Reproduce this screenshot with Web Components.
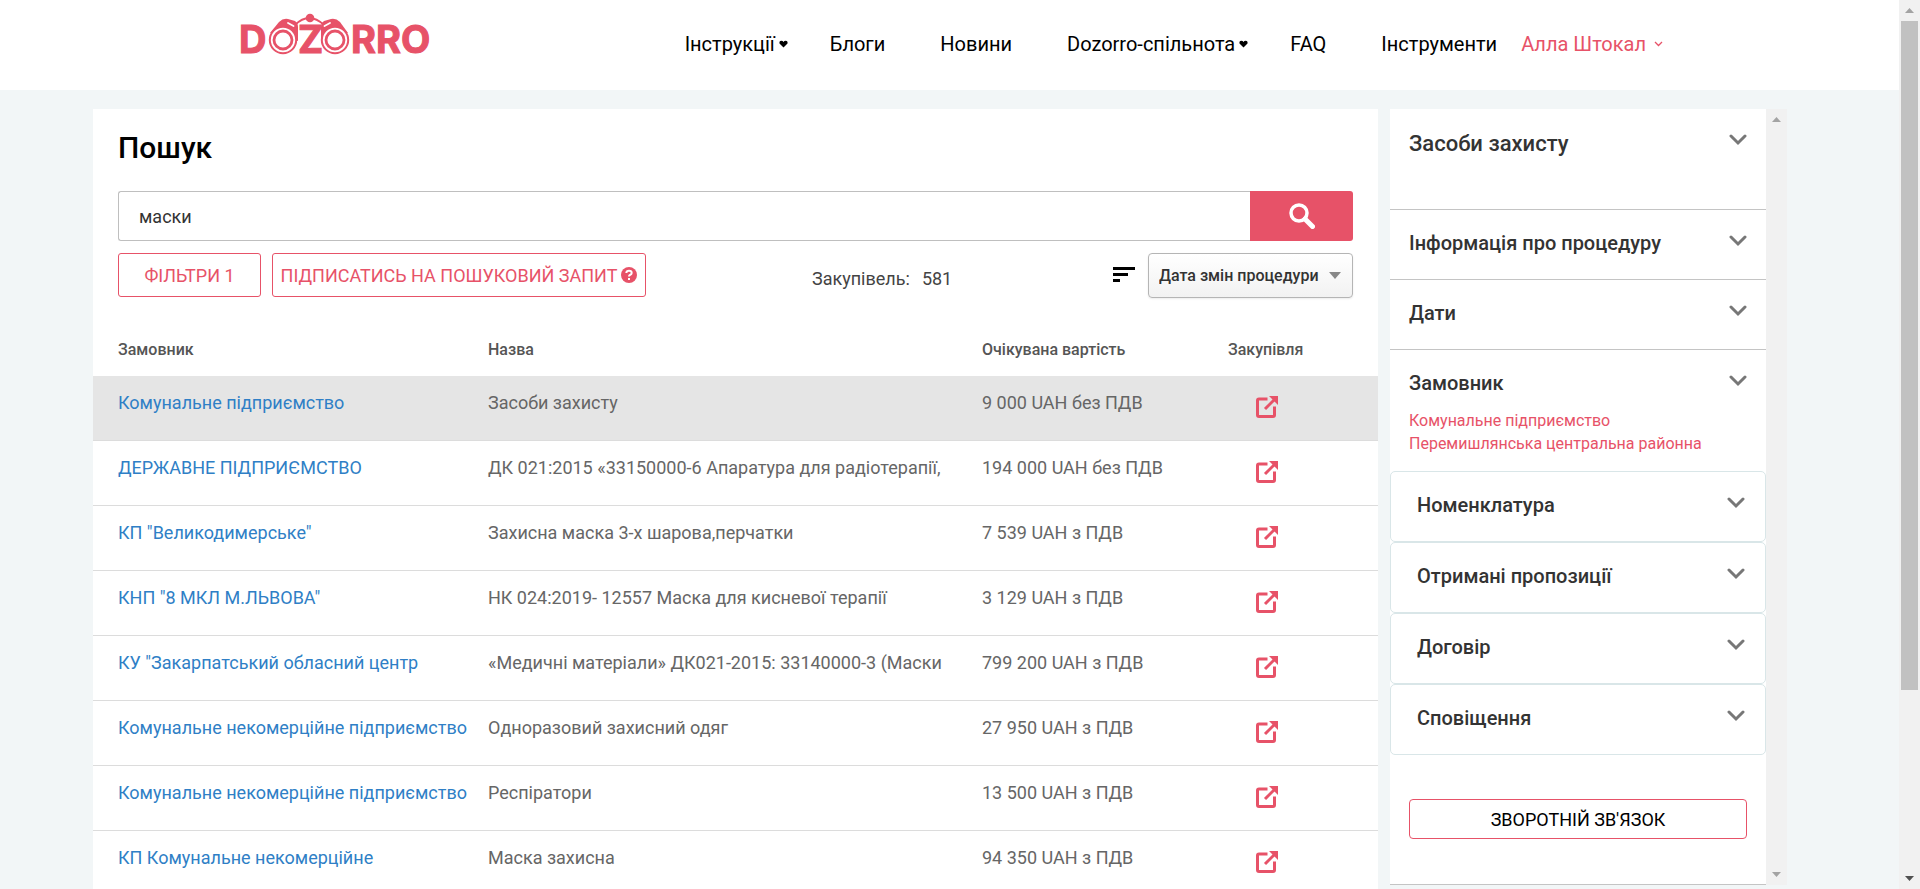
<!DOCTYPE html>
<html lang="uk">
<head>
<meta charset="utf-8">
<title>Dozorro — Пошук</title>
<style>
  html, body { margin: 0; height: 100%; }
  body {
    --accent: #e75268;
    --page: #f2f6f7;
    --ink: #333333;
    font-family: Roboto, "Liberation Sans", sans-serif;
    background: var(--page);
    color: var(--ink);
    overflow: hidden;
  }
</style>
</head>
<body>
<dz-app></dz-app>

<script>
const define = (name, html, setup) => {
  const template = document.createElement('template');
  template.innerHTML = html;
  customElements.define(name, class extends HTMLElement {
    constructor() {
      super();
      this.attachShadow({ mode: 'open' }).append(template.content.cloneNode(true));
    }
    connectedCallback() {
      if (setup && !this.ready) { this.ready = true; setup(this, this.shadowRoot); }
    }
  });
};

define('dz-logo', `
<style>
  :host { display: block; }
  a { display: block; }
  svg { display: block; }
  text { font: 700 38px Inter, Roboto, sans-serif; fill: var(--accent); stroke: var(--accent); stroke-width: 1; }
</style>
<a href="#" aria-label="Dozorro">
<svg width="204" height="64" viewBox="-4 0 204 64">
  <text x="-2" y="43">D</text>
  <text x="57" y="43">Z</text>
  <text x="110" y="43">RRO</text>
  <path d="M54 15 Q68 1 83 15" fill="none" stroke="var(--accent)" stroke-width="2"/>
  <circle cx="69" cy="8" r="4.300" fill="var(--accent)"/>
  <path d="M29 23 L38 12 Q42 8 47 9 L54 11 Q57 13 57 17 L57 31 Z" fill="var(--accent)"/>
  <path d="M107 23 L99 12 Q95 8 90 9 L83 11 Q80 13 80 17 L80 31 Z" fill="var(--accent)"/>
  <path d="M47 13 l5.500 3 M89 13 l-5.500 3" stroke="#fff" stroke-width="1.800" stroke-linecap="round"/>
  <g stroke="var(--accent)" fill="#fff">
    <circle cx="42" cy="30" r="13.200" stroke-width="2"/>
    <circle cx="94" cy="30" r="13.200" stroke-width="2"/>
    <circle cx="42" cy="30" r="9" stroke-width="2.800"/>
    <circle cx="94" cy="30" r="9" stroke-width="2.800"/>
  </g>
</svg>
</a>`);

define('dz-nav-link', `
<style>
  :host { display: block; position: relative; }
  a { color: #000; text-decoration: none; font-size: 20px; line-height: 24px; white-space: nowrap; }
  svg { display: none; position: absolute; right: -13px; top: 8px; }
  :host([menu]) svg { display: block; }
</style>
<a href="#"><slot></slot></a>
<svg width="9" height="8" viewBox="0 0 9 8"><path d="M4.500 7.500 L.5 3.500 Q0 1 2.300.7 Q3.800.7 4.500 2 Q5.200.7 6.700.7 Q9 1 8.500 3.500Z" fill="#000"/></svg>`);

define('dz-header', `
<style>
  :host { display: flex; justify-content: space-between; align-items: flex-start; box-sizing: border-box; height: 90px;
    padding: 10px 236px 0 237px; background: #fff; }
  nav { display: flex; gap: 55px; padding-top: 22px; align-items: center; }
  .user { display: flex; align-items: center; gap: 8px; margin-left: -31px; color: var(--accent);
    font-size: 20px; line-height: 24px; text-decoration: none; white-space: nowrap; }
</style>
<dz-logo></dz-logo>
<nav aria-label="Головне меню">
  <dz-nav-link menu>Інструкції</dz-nav-link>
  <dz-nav-link>Блоги</dz-nav-link>
  <dz-nav-link>Новини</dz-nav-link>
  <dz-nav-link menu>Dozorro-спільнота</dz-nav-link>
  <dz-nav-link>FAQ</dz-nav-link>
  <dz-nav-link>Інструменти</dz-nav-link>
  <a class="user" href="#">Алла Штокал
    <svg width="9" height="6" viewBox="0 0 9 6"><path d="M1 1l3.500 3.500L8 1" fill="none" stroke="currentColor" stroke-width="1.300"/></svg></a>
</nav>`);

define('dz-search', `
<style>
  :host { display: block; }
  form { display: flex; height: 50px; }
  input { flex: 1; min-width: 0; box-sizing: border-box; border: 1px solid #bfbfbf; border-right: 0; border-radius: 3px 0 0 3px;
    padding: 0 20px; font: 18px Roboto, sans-serif; color: var(--ink); background: #fff; outline: 0; }
  button { width: 103px; border: 0; border-radius: 0 3px 3px 0; background: var(--accent); display: grid; place-items: center; padding: 0; }
</style>
<form role="search">
  <input type="text" value="маски" aria-label="Пошуковий запит">
  <button type="button" aria-label="Шукати">
    <svg width="26" height="26" viewBox="0 0 26 26" fill="none" stroke="#fff"><circle cx="10" cy="10" r="8" stroke-width="3.500"/><path d="M16 16l7.500 7.500" stroke-width="5" stroke-linecap="round"/></svg>
  </button>
</form>`);

define('dz-toolbar', `
<style>
  :host { display: flex; align-items: flex-start; gap: 11px; }
  button { box-sizing: border-box; height: 44px; border: 1px solid var(--accent); border-radius: 3px; background: #fff; color: var(--accent);
    font: 18px Roboto, sans-serif; padding: 0; display: flex; align-items: center; justify-content: center; gap: 4px; white-space: nowrap; }
  .filters { width: 143px; }
  .subscribe { width: 374px; }
  .count { display: flex; gap: 12px; margin-left: 155px; font-size: 18px; line-height: 24px; padding-top: 14px; color: #444; }
  .sort { margin-left: auto; display: flex; gap: 13px; }
  .sort > svg { margin-top: 14px; }
  .box { display: grid; }
  .box > * { grid-area: 1 / 1; }
  .box svg { justify-self: end; align-self: center; margin-right: 12px; pointer-events: none; }
  select { appearance: none; box-sizing: border-box; width: 205px; height: 45px; border: 1px solid #b5b5b5; border-radius: 4px;
    background: linear-gradient(#fff, #f2f2f2); box-shadow: 0 1px 2px #00000014; padding: 0 10px; font: 500 16px Roboto, sans-serif; color: var(--ink); }
</style>
<button class="filters" type="button">ФІЛЬТРИ 1</button>
<button class="subscribe" type="button">ПІДПИСАТИСЬ НА ПОШУКОВИЙ ЗАПИТ
  <svg width="16" height="16" viewBox="0 0 16 16"><circle cx="8" cy="8" r="8" fill="currentColor"/><path d="M5.300 6 Q5.500 3.800 8 3.800 Q10.700 3.800 10.700 6 Q10.700 7.300 8.900 8 Q8 8.400 8 9.500" fill="none" stroke="#fff" stroke-width="2"/><rect x="7" y="11" width="2" height="2" fill="#fff"/></svg>
</button>
<div class="count"><span>Закупівель:</span><span>581</span></div>
<div class="sort">
  <svg width="22" height="15" viewBox="0 0 22 15"><path d="M0 0h22v3H0zM0 6h15v3H0zM0 12h7v3H0z" fill="#000"/></svg>
  <div class="box">
    <select aria-label="Сортування"><option>Дата змін процедури</option></select>
    <svg width="12" height="7" viewBox="0 0 12 7"><path d="M0 0h12L6 7z" fill="#888"/></svg>
  </div>
</div>`);

define('dz-open-icon', `
<style>:host { display: block; } svg { display: block; }</style>
<svg width="24" height="24" viewBox="0 0 24 24" fill="none" stroke="var(--accent)" stroke-width="3">
  <path d="M12.500 4H4Q2.500 4 2.500 5.500V20Q2.500 21.500 4 21.500H18Q19.500 21.500 19.500 20V11.500" />
  <path d="M10 14L20 4"/><path d="M14 1h9v9z" fill="var(--accent)" stroke="none"/>
</svg>`);

const tenders = [
  ['Комунальне підприємство', 'Засоби захисту', '9 000 UAH без ПДВ'],
  ['ДЕРЖАВНЕ ПІДПРИЄМСТВО', 'ДК 021:2015 «33150000-6 Апаратура для радіотерапії,', '194 000 UAH без ПДВ'],
  ['КП "Великодимерське"', 'Захисна маска 3-х шарова,перчатки', '7 539 UAH з ПДВ'],
  ['КНП "8 МКЛ М.ЛЬВОВА"', 'НК 024:2019- 12557 Маска для кисневої терапії', '3 129 UAH з ПДВ'],
  ['КУ "Закарпатський обласний центр', '«Медичні матеріали» ДК021-2015: 33140000-3 (Маски', '799 200 UAH з ПДВ'],
  ['Комунальне некомерційне підприємство', 'Одноразовий захисний одяг', '27 950 UAH з ПДВ'],
  ['Комунальне некомерційне підприємство', 'Респіратори', '13 500 UAH з ПДВ'],
  ['КП Комунальне некомерційне', 'Маска захисна', '94 350 UAH з ПДВ']
];

define('dz-results', `
<style>
  :host { display: block; }
  table { width: 100%; table-layout: fixed; border-collapse: separate; border-spacing: 0; }
  .buyer { width: 395px; } .price { width: 246px; } .link { width: 150px; }
  th { text-align: left; font-weight: 500; font-size: 16px; line-height: 20px; color: #555; padding: 42px 0 16px; }
  td { font-size: 18px; line-height: 24px; padding: 15px 0 25px; vertical-align: top; color: #666; white-space: nowrap; border-bottom: 1px solid #dcdcdc; }
  th:first-child, td:first-child { padding-left: 25px; }
  td:last-child { padding: 19px 0 0 27px; }
  td a { color: #2f7fc6; text-decoration: none; }
  td:last-child a { display: inline-block; }
  tr.selected td { background: #e5e5e5; }
</style>
<table>
  <colgroup><col class="buyer"><col><col class="price"><col class="link"></colgroup>
  <thead><tr><th>Замовник</th><th>Назва</th><th>Очікувана вартість</th><th>Закупівля</th></tr></thead>
  <tbody></tbody>
</table>`, (host, root) => {
  const body = root.querySelector('tbody');
  tenders.forEach(([buyer, title, price], i) => {
    const row = body.insertRow();
    if (i === 0) row.className = 'selected';
    const link = document.createElement('a');
    link.href = '#';
    link.textContent = buyer;
    row.insertCell().append(link);
    row.insertCell().textContent = title;
    row.insertCell().textContent = price;
    const open = document.createElement('a');
    open.href = '#';
    open.setAttribute('aria-label', 'Відкрити закупівлю');
    open.append(document.createElement('dz-open-icon'));
    row.insertCell().append(open);
  });
});

define('dz-section', `
<style>
  :host { display: block; box-sizing: border-box; min-height: 70px; padding: 21px 19px 0; background: #fff; border-bottom: 1px solid #c4c4c4; }
  button { display: flex; width: 100%; justify-content: space-between; align-items: flex-start; border: 0; background: none; padding: 0;
    font: 500 20px/24px Roboto, sans-serif; color: var(--ink); text-align: left; }
  svg { margin-top: 4px; flex: none; }
  :host([lead]) { min-height: 101px; }
  :host([lead]) button { font-size: 22px; line-height: 28px; }
  :host([open]) { border-bottom: 0; min-height: 121px; }
  :host([card]) { min-height: 71px; border: 1px solid #d9e6e8; border-radius: 5px; padding: 21px 20px 0 26px; }
  ::slotted(a) { display: block; color: var(--accent); font-size: 16px; line-height: 23px; text-decoration: none; }
  .body { padding-top: 14px; }
</style>
<button type="button"><slot name="title"></slot>
<svg width="18" height="12" viewBox="0 0 18 12"><path d="M2 2l7 7 7-7" fill="none" stroke="#777" stroke-width="3" stroke-linecap="round"/></svg></button>
<div class="body"><slot></slot></div>`);

define('dz-scrollbar', `
<style>
  :host { display: flex; flex-direction: column; width: 21px; flex: none; background: #f1f1f1; align-items: center; justify-content: space-between; }
  svg { flex: none; margin: 8px 0; }
  .track { flex: 1; align-self: stretch; padding: 0 2px; }
  .thumb { height: 79%; background: #c1c1c1; }
  :host([idle]) .thumb { display: none; }
  .down { fill: #505050; }
  :host([idle]) .down { fill: #a3a3a3; }
</style>
<svg width="9" height="5" viewBox="0 0 9 5"><path d="M0 5h9L4.500 0z" fill="#a3a3a3"/></svg>
<div class="track"><div class="thumb"></div></div>
<svg class="down" width="9" height="5" viewBox="0 0 9 5"><path d="M0 0h9L4.500 5z"/></svg>`);

define('dz-sidebar', `
<style>
  :host { display: flex; }
  .list { flex: 1; min-width: 0; background: #fff; display: flex; flex-direction: column; border-bottom: 1px solid #c4c4c4; }
  .feedback { margin: 44px 19px 0; box-sizing: border-box; height: 40px; border: 1px solid var(--accent); border-radius: 4px; background: #fff;
    font: 18px Roboto, sans-serif; color: #000; padding: 0; }
</style>
<div class="list">
  <dz-section lead><span slot="title">Засоби захисту</span></dz-section>
  <dz-section><span slot="title">Інформація про процедуру</span></dz-section>
  <dz-section><span slot="title">Дати</span></dz-section>
  <dz-section open><span slot="title">Замовник</span>
    <a href="#">Комунальне підприємство</a>
    <a href="#">Перемишлянська центральна районна</a>
  </dz-section>
  <dz-section card><span slot="title">Номенклатура</span></dz-section>
  <dz-section card><span slot="title">Отримані пропозиції</span></dz-section>
  <dz-section card><span slot="title">Договір</span></dz-section>
  <dz-section card><span slot="title">Сповіщення</span></dz-section>
  <button class="feedback" type="button">ЗВОРОТНІЙ ЗВ'ЯЗОК</button>
</div>
<dz-scrollbar idle></dz-scrollbar>`);

define('dz-app', `
<style>
  :host { display: flex; height: 100vh; }
  .page { flex: 1; min-width: 0; overflow: hidden; }
  .columns { display: flex; align-items: flex-start; gap: 12px; padding: 19px 112px 0 93px; }
  main { flex: 1; min-width: 0; background: #fff; min-height: 100vh; }
  .top { padding: 21px 25px 0; }
  h1 { margin: 0 0 25px; font-weight: 500; font-size: 30px; line-height: 36px; color: #000; }
  dz-toolbar { margin-top: 12px; }
  dz-sidebar { flex: 0 0 397px; height: calc(100vh - 113px); }
</style>
<div class="page">
  <dz-header></dz-header>
  <div class="columns">
    <main>
      <div class="top">
        <h1>Пошук</h1>
        <dz-search></dz-search>
        <dz-toolbar></dz-toolbar>
      </div>
      <dz-results></dz-results>
    </main>
    <dz-sidebar></dz-sidebar>
  </div>
</div>
<dz-scrollbar></dz-scrollbar>`);
</script>
</body>
</html>
